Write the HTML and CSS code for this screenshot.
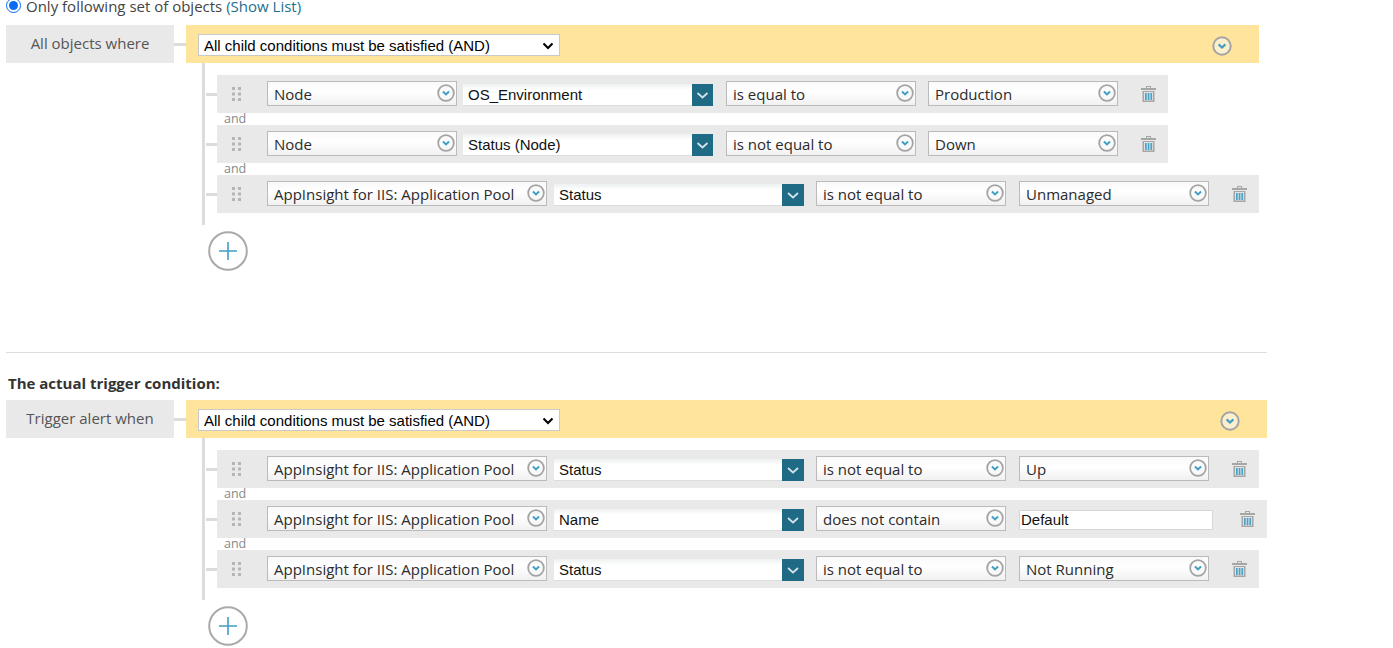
FILE: index.html
```html
<!DOCTYPE html>
<html lang="en">
<head>
<meta charset="utf-8">
<title>Trigger condition</title>
<link rel="stylesheet" href="styles.css">
</head>
<body>
<svg class="defs" width="0" height="0" aria-hidden="true">
  <symbol id="round" viewBox="0 0 20 20">
    <circle cx="10" cy="10" r="8.700" fill="#f7f7f7" fill-opacity=".55" stroke="#a4a4a4" stroke-width="2"/>
    <path d="M6.600 8.400 10 11.600 13.400 8.400" fill="none" stroke="#3f9fc4" stroke-width="2.200"/>
  </symbol>
  <symbol id="drop" viewBox="0 0 21 22">
    <path d="M5.500 9 10.500 13.500 15.500 9" fill="none" stroke="#d5e4ea" stroke-width="1.700"/>
  </symbol>
  <symbol id="caret" viewBox="0 0 12 8">
    <path d="M1.500 1.500 6 6 10.500 1.500" fill="none" stroke="#000" stroke-width="2"/>
  </symbol>
  <symbol id="grip" viewBox="0 0 9 14">
    <path fill="#b5b5b5" d="M0 0h3v3H0zM6 0h3v3H6zM0 5.500h3v3H0zM6 5.500h3v3H6zM0 11h3v3H0zM6 11h3v3H6z"/>
  </symbol>
  <symbol id="trash" viewBox="0 0 15 16">
    <path fill="#a6a6a6" d="M5 0h5v2h5v2H0V2h5zM6 1v1h3V1zM1.500 5h12v11h-12z"/>
    <path fill="#e3e3e3" d="M3 6h9v8.500H3z"/>
    <path fill="#47a3c7" d="M4 7h1.700v7H4zM6.700 7h1.700v7H6.700zM9.400 7h1.700v7H9.400z"/>
  </symbol>
  <symbol id="plus" viewBox="0 0 40 40">
    <circle cx="20" cy="20" r="18.800" fill="#fff" stroke="#a9a9a9" stroke-width="2"/>
    <path d="M20 11v18M11 20h18" fill="none" stroke="#3f9fc4" stroke-width="1.600"/>
  </symbol>
</svg>

<main class="page">
  <div class="scope">
    <input class="radio" type="radio" name="scope" checked>
    <span>Only following set of objects <a class="link" href="#">(Show List)</a></span>
  </div>

  <section class="block block-first">
    <div class="block-label">All objects where</div>
    <div class="link-stub"></div>
    <div class="group">
      <div class="group-bar">
        <div class="native-wrap">
          <select class="native"><option>All child conditions must be satisfied (AND)</option></select>
          <svg class="caret"><use href="#caret"/></svg>
        </div>
        <svg class="bar-toggle"><use href="#round"/></svg>
      </div>
      <div class="tree">
        <div class="row">
          <svg class="grip"><use href="#grip"/></svg>
          <div class="combo w-node"><span>Node</span><svg class="round"><use href="#round"/></svg></div>
          <div class="field gap-a"><span>OS_Environment</span><svg class="drop"><use href="#drop"/></svg></div>
          <div class="combo w-op gap-b"><span>is equal to</span><svg class="round"><use href="#round"/></svg></div>
          <div class="combo w-val gap-c"><span>Production</span><svg class="round"><use href="#round"/></svg></div>
          <svg class="trash"><use href="#trash"/></svg>
        </div>
        <div class="and">and</div>
        <div class="row">
          <svg class="grip"><use href="#grip"/></svg>
          <div class="combo w-node"><span>Node</span><svg class="round"><use href="#round"/></svg></div>
          <div class="field gap-a"><span>Status (Node)</span><svg class="drop"><use href="#drop"/></svg></div>
          <div class="combo w-op gap-b"><span>is not equal to</span><svg class="round"><use href="#round"/></svg></div>
          <div class="combo w-val gap-c"><span>Down</span><svg class="round"><use href="#round"/></svg></div>
          <svg class="trash"><use href="#trash"/></svg>
        </div>
        <div class="and">and</div>
        <div class="row">
          <svg class="grip"><use href="#grip"/></svg>
          <div class="combo w-pool"><span>AppInsight for IIS: Application Pool</span><svg class="round"><use href="#round"/></svg></div>
          <div class="field gap-d"><span>Status</span><svg class="drop"><use href="#drop"/></svg></div>
          <div class="combo w-op gap-e"><span>is not equal to</span><svg class="round"><use href="#round"/></svg></div>
          <div class="combo w-val gap-f"><span>Unmanaged</span><svg class="round"><use href="#round"/></svg></div>
          <svg class="trash"><use href="#trash"/></svg>
        </div>
      </div>
      <svg class="add"><use href="#plus"/></svg>
    </div>
  </section>

  <hr class="rule">
  <h2 class="heading">The actual trigger condition:</h2>

  <section class="block block-second">
    <div class="block-label">Trigger alert when</div>
    <div class="link-stub"></div>
    <div class="group">
      <div class="group-bar">
        <div class="native-wrap">
          <select class="native"><option>All child conditions must be satisfied (AND)</option></select>
          <svg class="caret"><use href="#caret"/></svg>
        </div>
        <svg class="bar-toggle"><use href="#round"/></svg>
      </div>
      <div class="tree">
        <div class="row">
          <svg class="grip"><use href="#grip"/></svg>
          <div class="combo w-pool"><span>AppInsight for IIS: Application Pool</span><svg class="round"><use href="#round"/></svg></div>
          <div class="field gap-d"><span>Status</span><svg class="drop"><use href="#drop"/></svg></div>
          <div class="combo w-op gap-e"><span>is not equal to</span><svg class="round"><use href="#round"/></svg></div>
          <div class="combo w-val gap-f"><span>Up</span><svg class="round"><use href="#round"/></svg></div>
          <svg class="trash"><use href="#trash"/></svg>
        </div>
        <div class="and">and</div>
        <div class="row">
          <svg class="grip"><use href="#grip"/></svg>
          <div class="combo w-pool"><span>AppInsight for IIS: Application Pool</span><svg class="round"><use href="#round"/></svg></div>
          <div class="field gap-d"><span>Name</span><svg class="drop"><use href="#drop"/></svg></div>
          <div class="combo w-op gap-e"><span>does not contain</span><svg class="round"><use href="#round"/></svg></div>
          <input class="text-input gap-f" type="text" value="Default">
          <svg class="trash trash-wide"><use href="#trash"/></svg>
        </div>
        <div class="and">and</div>
        <div class="row">
          <svg class="grip"><use href="#grip"/></svg>
          <div class="combo w-pool"><span>AppInsight for IIS: Application Pool</span><svg class="round"><use href="#round"/></svg></div>
          <div class="field gap-d"><span>Status</span><svg class="drop"><use href="#drop"/></svg></div>
          <div class="combo w-op gap-e"><span>is not equal to</span><svg class="round"><use href="#round"/></svg></div>
          <div class="combo w-val gap-f"><span>Not Running</span><svg class="round"><use href="#round"/></svg></div>
          <svg class="trash"><use href="#trash"/></svg>
        </div>
      </div>
      <svg class="add"><use href="#plus"/></svg>
    </div>
  </section>
</main>
</body>
</html>
```

FILE: styles.css
```css
* { box-sizing: border-box; }
html, body { margin: 0; padding: 0; overflow: hidden; height: 648px; background: #fff; }
body { font-family: "Open Sans", "Liberation Sans", sans-serif; font-size: 15px; color: #333; }
.defs { position: absolute; }

.page { padding-left: 6px; width: 1267px; }

.scope { display: flex; align-items: center; height: 25px; margin-top: -6px; color: #444; line-height: 19px; }
.radio { width: 15px; height: 15px; margin: -2px 5px 0 0; accent-color: #0a6cf5; flex: none; }
.scope span { margin-top: -1px; }
.link { color: #1d6f8f; text-decoration: none; }

.block { display: flex; align-items: flex-start; margin-top: 6px; }
.block-label { width: 168px; height: 38px; background: #e9e9e9; color: #555; text-align: center; line-height: 36px; flex: none; }
.link-stub { width: 12px; height: 3px; margin-top: 18px; background: #dcdcdc; flex: none; }
.group { flex: none; width: 1073px; display: flex; flex-direction: column; }
.block-second .group { width: 1081px; }
.group-bar { height: 38px; background: #ffe49c; display: flex; align-items: center; justify-content: space-between; padding: 0 27px 0 12px; }
.native-wrap { position: relative; width: 362px; height: 22px; margin-top: 1px; }
.native { appearance: none; display: block; width: 100%; height: 100%; font-family: "Liberation Sans", Arial, sans-serif; font-size: 15px; color: #000; background: #fff; border: 1px solid #c9c9c9; border-radius: 0; padding: 1px 0 0 5px; }
.caret { position: absolute; right: 6px; top: 8px; width: 12px; height: 8px; pointer-events: none; }
.bar-toggle { width: 20px; height: 20px; margin-top: 3px; }

.tree { margin-left: 16px; border-left: 3px solid #dcdcdc; padding: 12px 0 12px 12px; display: flex; flex-direction: column; align-items: flex-start; }
.row { position: relative; height: 38px; background: #e9e9e9; display: flex; align-items: center; padding-right: 12px; }
.row::before { content: ""; position: absolute; left: -11px; top: 18px; width: 11px; height: 3px; background: #dcdcdc; }
.and { height: 12px; font-size: 12.500px; line-height: 12px; color: #888; padding-left: 7px; }

.grip { width: 9px; height: 14px; margin: 0 26px 0 15px; flex: none; }
.combo { height: 25px; margin-top: -1px; border: 1px solid #bbb; display: flex; align-items: center; justify-content: space-between; padding: 0 1px 0 6px; background: linear-gradient(#f9f9f9, #fff 40%, #f1f1f1); color: #2b2b2b; flex: none; white-space: nowrap; line-height: 22px; }
.round { width: 18px; height: 18px; margin-top: -2px; flex: none; }
.w-node { width: 190px; }
.w-pool { width: 280px; }
.w-op { width: 190px; }
.w-val { width: 190px; }

.field { width: 250px; height: 22px; display: flex; align-items: center; justify-content: space-between; padding-left: 5px; background: linear-gradient(#eef1f1, #fff 30%); border-bottom: 1px solid #ddd; font-family: "Liberation Sans", Arial, sans-serif; font-size: 15px; color: #111; flex: none; margin-top: 1px; }
.drop { width: 21px; height: 22px; background: #1f6a85; flex: none; margin-bottom: -1px; }
.gap-d .drop { width: 22px; }

.gap-a { margin-left: 6px; }
.gap-b { margin-left: 13px; }
.gap-c { margin-left: 12px; }
.gap-d { margin-left: 7px; }
.gap-e { margin-left: 12px; }
.gap-f { margin-left: 13px; }

.text-input { width: 194px; height: 20px; margin-top: 1px; margin-right: 0; border: 1px solid #d6d6d6; background: #fff; padding: 0 1px; font-family: "Liberation Sans", Arial, sans-serif; font-size: 15px; color: #111; flex: none; }
.trash { width: 15px; height: 16px; margin-left: 23px; flex: none; }
.trash-wide { margin-left: 27px; }
.add { width: 40px; height: 40px; margin: 6px 0 0 22px; }

.rule { border: 0; height: 1px; background: #ddd; margin: 81px 0 0; }
.heading { margin: 21px 0 0 2px; font-size: 15px; line-height: 19px; font-weight: 700; color: #333; }
.block-second { margin-top: 7px; }
```
